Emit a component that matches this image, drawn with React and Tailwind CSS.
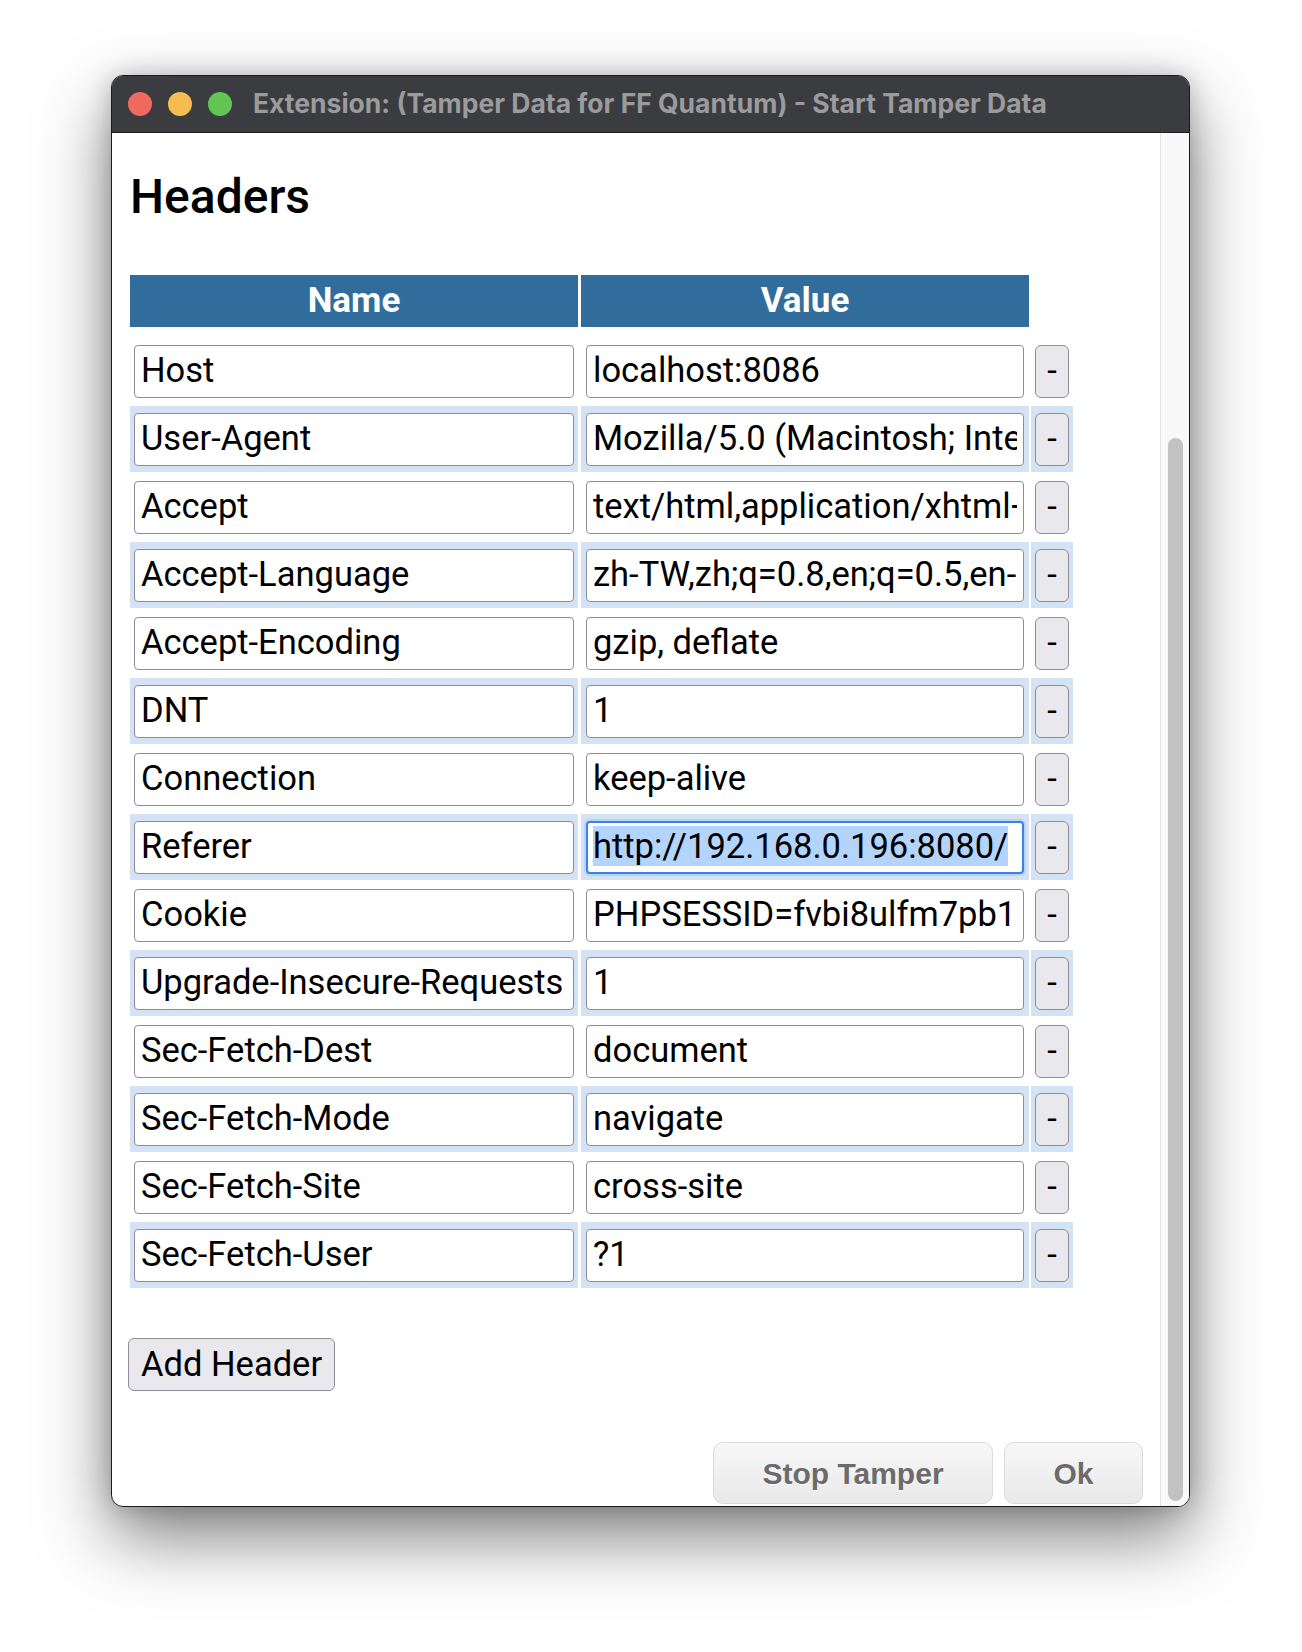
import React from 'react';

const headers = [
  { name: 'Host', value: 'localhost:8086' },
  { name: 'User-Agent', value: 'Mozilla/5.0 (Macintosh; Intel Mac OS X 10.15; rv:109.0) Gecko/20100101 Firefox/115.0' },
  { name: 'Accept', value: 'text/html,application/xhtml+xml,application/xml;q=0.9,image/avif,image/webp,*/*;q=0.8' },
  { name: 'Accept-Language', value: 'zh-TW,zh;q=0.8,en;q=0.5,en-US;q=0.3' },
  { name: 'Accept-Encoding', value: 'gzip, deflate' },
  { name: 'DNT', value: '1' },
  { name: 'Connection', value: 'keep-alive' },
  { name: 'Referer', value: 'http://192.168.0.196:8080/', focused: true },
  { name: 'Cookie', value: 'PHPSESSID=fvbi8ulfm7pb1q3kd0s6tq2r9a' },
  { name: 'Upgrade-Insecure-Requests', value: '1' },
  { name: 'Sec-Fetch-Dest', value: 'document' },
  { name: 'Sec-Fetch-Mode', value: 'navigate' },
  { name: 'Sec-Fetch-Site', value: 'cross-site' },
  { name: 'Sec-Fetch-User', value: '?1' },
];

const Field = ({ children, focused, className }) => (
  <div
    className={
      focused
        ? `h-[53px] rounded-[4px] border-[2.5px] border-[#3b82e8] ring-2 ring-[#b9d3f4] bg-white pl-[5px] pr-[6px] flex items-center ${className}`
        : `h-[53px] rounded-[4px] border-[1.5px] border-[#8e8c97] bg-white pl-[6px] pr-[6px] flex items-center ${className}`
    }
  >
    <div className="overflow-hidden whitespace-nowrap w-full">{children}</div>
  </div>
);

const HeaderRow = ({ item, striped }) => {
  const cellBg = striped ? 'bg-[#d4e3f3]' : 'bg-white';
  return (
    <div className="flex h-[66px]">
      <div className={`w-[448px] flex items-center px-[4px] ${cellBg}`}>
        <Field className="w-full">{item.name}</Field>
      </div>
      <div className={`w-[448px] ml-[3px] flex items-center px-[5px] ${cellBg}`}>
        <Field className="w-full" focused={item.focused}>
          {item.focused ? <span className="bg-[#b3d4fc]">{item.value}</span> : item.value}
        </Field>
      </div>
      <div className={`w-[42px] ml-[2px] flex items-center justify-center ${cellBg}`}>
        <button className="w-[34px] h-[53px] rounded-[6px] border-[1.5px] border-[#8e8c97] bg-[#e9e8ed] text-black flex items-center justify-center">
          -
        </button>
      </div>
    </div>
  );
};

const App = () => {
  return (
    <div className="w-[1302px] h-[1652px] bg-white pt-[75px] pl-[111px]">
      <div className="w-[1079px] h-[1432px] rounded-[12px] border border-[#1b1b1b] overflow-hidden flex flex-col bg-white shadow-[0_30px_70px_rgba(0,0,0,0.5),0_0_24px_rgba(0,0,0,0.2)]">
        {/* title bar */}
        <div className="h-[57px] shrink-0 bg-[#3a3c40] border-b border-[#1d1d1f] flex items-center pl-[16px]">
          <div className="flex gap-[16px]">
            <span className="w-[24px] h-[24px] rounded-full bg-[#ee6a5f]" />
            <span className="w-[24px] h-[24px] rounded-full bg-[#f5bd4f]" />
            <span className="w-[24px] h-[24px] rounded-full bg-[#61c454]" />
          </div>
          <div className="ml-[21px] text-[26.5px] font-bold text-[#9b9b9e] font-['Inter',sans-serif] whitespace-nowrap">
            Extension: (Tamper Data for FF Quantum) - Start Tamper Data
          </div>
        </div>

        {/* body */}
        <div className="flex flex-1 min-h-0">
          <div className="flex-1 overflow-hidden pl-[18px] pt-[40px] font-['Roboto',sans-serif] text-[34.5px] text-black">
            <h1 className="text-[48px] leading-none font-medium">Headers</h1>

            <div className="mt-[54px]">
              <div className="flex h-[52px] text-[35px]">
                <div className="w-[448px] bg-[#316d9c] text-white font-bold flex items-center justify-center">Name</div>
                <div className="w-[448px] ml-[3px] bg-[#316d9c] text-white font-bold flex items-center justify-center">Value</div>
              </div>
              <div className="mt-[11px] flex flex-col gap-[2px]">
                {headers.map((h, i) => (
                  <HeaderRow key={h.name} item={h} striped={i % 2 === 1} />
                ))}
              </div>
            </div>

            <button className="mt-[50px] -ml-[2px] h-[53px] px-[12px] rounded-[6px] border-[1.5px] border-[#8e8c97] bg-[#e9e8ed] text-black">
              Add Header
            </button>

            <div className="mt-[51px] flex justify-end gap-[11px] pr-[17px] font-['Liberation_Sans',sans-serif]">
              <button className="w-[280px] h-[62px] rounded-[10px] border-[1.5px] border-[#dadada] bg-gradient-to-b from-[#f7f7f7] to-[#e9e9e9] text-[30px] font-bold text-[#6b6b6b] [text-shadow:0_1px_0_#ffffff]">
                Stop Tamper
              </button>
              <button className="w-[139px] h-[62px] rounded-[10px] border-[1.5px] border-[#dadada] bg-gradient-to-b from-[#f7f7f7] to-[#e9e9e9] text-[30px] font-bold text-[#6b6b6b] [text-shadow:0_1px_0_#ffffff]">
                Ok
              </button>
            </div>
          </div>

          {/* scrollbar */}
          <div className="w-[29px] shrink-0 border-l border-[#e4e4e4] bg-[#f9f9f9] pt-[305px] pb-[5px] pl-[7px] pr-[6px] flex">
            <div className="flex-1 rounded-full bg-[#c2c2c2]" />
          </div>
        </div>
      </div>
    </div>
  );
};

export default App;
